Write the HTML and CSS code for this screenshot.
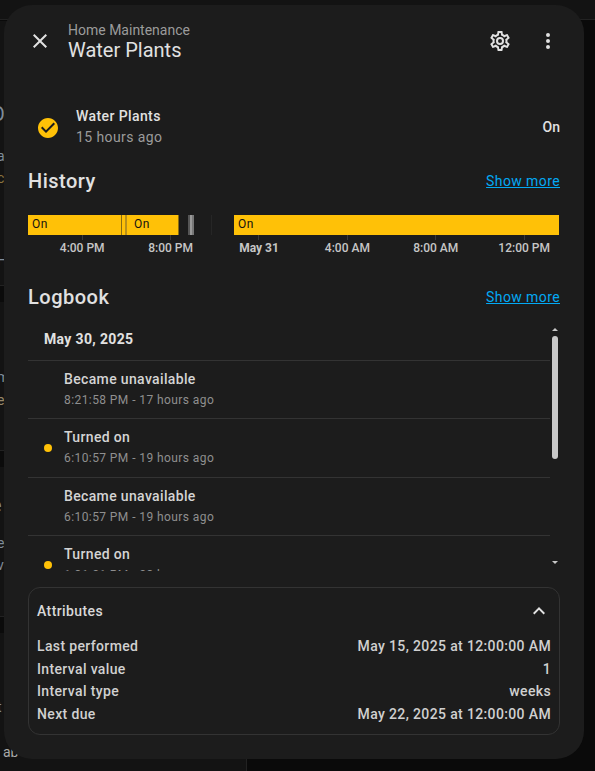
FILE: index.html
```html
<!DOCTYPE html>
<html>
<head>
    <link rel="stylesheet" href="styles.css">
</head>
<body>
    <!-- page behind the dialog, only a sliver shows -->
    <div class="behind">
        <div class="behind-top"></div>
        <div class="behind-left"></div>
        <div class="behind-bar b1"></div>
        <div class="behind-bar b2"></div>
        <div class="behind-bar b3"></div>
        <div class="scrap scrap-big s1">O</div>
        <div class="scrap s2">a</div>
        <div class="scrap s3">c</div>
        <div class="scrap s4">H</div>
        <div class="scrap s5">m</div>
        <div class="scrap s6">e</div>
        <div class="scrap scrap-big s7">e</div>
        <div class="scrap s8">e</div>
        <div class="scrap s9">v</div>
        <div class="scrap s10">t</div>
        <div class="scrap s11">ab</div>
        <div class="behind-split"></div>
    </div>

    <div class="dialog">
        <header class="dialog-header">
            <button class="icon-btn" type="button">
                <svg viewBox="0 0 24 24" class="icon"><path d="M19,6.41L17.59,5L12,10.59L6.41,5L5,6.41L10.59,12L5,17.59L6.41,19L12,13.41L17.59,19L19,17.59L13.41,12L19,6.41Z"/></svg>
            </button>
            <div class="dialog-title">
                <div class="breadcrumb">Home Maintenance</div>
                <div class="name">Water Plants</div>
            </div>
            <button class="icon-btn" type="button">
                <svg viewBox="0 0 24 24" class="icon"><path d="M12,8A4,4 0 0,1 16,12A4,4 0 0,1 12,16A4,4 0 0,1 8,12A4,4 0 0,1 12,8M12,10A2,2 0 0,0 10,12A2,2 0 0,0 12,14A2,2 0 0,0 14,12A2,2 0 0,0 12,10M10,22C9.75,22 9.54,21.82 9.5,21.58L9.13,18.93C8.5,18.68 7.96,18.34 7.44,17.94L4.95,18.95C4.73,19.03 4.46,18.95 4.34,18.73L2.34,15.27C2.21,15.05 2.27,14.78 2.46,14.63L4.57,12.97L4.5,12L4.57,11L2.46,9.37C2.27,9.22 2.21,8.95 2.34,8.73L4.34,5.27C4.46,5.05 4.73,4.96 4.95,5.05L7.44,6.05C7.96,5.66 8.5,5.32 9.13,5.07L9.5,2.42C9.54,2.18 9.75,2 10,2H14C14.25,2 14.46,2.18 14.5,2.42L14.87,5.07C15.5,5.32 16.04,5.66 16.56,6.05L19.05,5.05C19.27,4.96 19.54,5.05 19.66,5.27L21.66,8.73C21.79,8.95 21.73,9.22 21.54,9.37L19.43,11L19.5,12L19.43,13L21.54,14.63C21.73,14.78 21.79,15.05 21.66,15.27L19.66,18.73C19.54,18.95 19.27,19.04 19.05,18.95L16.56,17.95C16.04,18.34 15.5,18.68 14.87,18.93L14.5,21.58C14.46,21.82 14.25,22 14,22H10M11.25,4L10.88,6.61C9.68,6.86 8.62,7.5 7.85,8.39L5.44,7.35L4.69,8.65L6.8,10.2C6.4,11.37 6.4,12.64 6.8,13.8L4.68,15.36L5.43,16.66L7.86,15.62C8.63,16.5 9.68,17.14 10.87,17.38L11.24,20H12.76L13.13,17.39C14.32,17.14 15.37,16.5 16.14,15.62L18.57,16.66L19.32,15.36L17.2,13.81C17.6,12.64 17.6,11.37 17.2,10.2L19.31,8.65L18.56,7.35L16.15,8.39C15.38,7.5 14.32,6.86 13.12,6.62L12.75,4H11.25Z"/></svg>
            </button>
            <button class="icon-btn" type="button">
                <svg viewBox="0 0 24 24" class="icon"><path d="M12,16A2,2 0 0,1 14,18A2,2 0 0,1 12,20A2,2 0 0,1 10,18A2,2 0 0,1 12,16M12,10A2,2 0 0,1 14,12A2,2 0 0,1 12,14A2,2 0 0,1 10,12A2,2 0 0,1 12,10M12,4A2,2 0 0,1 14,6A2,2 0 0,1 12,8A2,2 0 0,1 10,6A2,2 0 0,1 12,4Z"/></svg>
            </button>
        </header>

        <div class="state-row">
            <svg viewBox="0 0 24 24" class="state-icon"><path d="M12 2C6.5 2 2 6.5 2 12S6.5 22 12 22 22 17.5 22 12 17.5 2 12 2M10 17L5 12L6.41 10.59L10 14.17L17.59 6.58L19 8L10 17Z"/></svg>
            <div class="state-text">
                <div class="state-name">Water Plants</div>
                <div class="state-time">15 hours ago</div>
            </div>
            <div class="state-value">On</div>
        </div>

        <div class="section-head section-history">
            <h3>History</h3>
            <a class="more" href="#">Show more</a>
        </div>

        <div class="timeline">
            <div class="bar">
                <div class="seg on w93"><span>On</span></div>
                <div class="seg dark w1"></div>
                <div class="seg on w3"></div>
                <div class="seg olive w2"></div>
                <div class="seg on w3"></div>
                <div class="seg on seg-edge w49"><span>On</span></div>
                <div class="seg gap w9"></div>
                <div class="seg grey w2"></div>
                <div class="seg grey2 w2"></div>
                <div class="seg grey3 w2"></div>
                <div class="seg gap w17"></div>
                <div class="seg faint w1"></div>
                <div class="seg gap w22"></div>
                <div class="seg on wide"><span>On</span></div>
            </div>
            <div class="ticks">
                <div class="tick">4:00 PM</div>
                <div class="tick">8:00 PM</div>
                <div class="tick major">May 31</div>
                <div class="tick">4:00 AM</div>
                <div class="tick">8:00 AM</div>
                <div class="tick">12:00 PM</div>
            </div>
        </div>

        <div class="section-head section-logbook">
            <h3>Logbook</h3>
            <a class="more" href="#">Show more</a>
        </div>

        <div class="logbook">
            <div class="log-list">
                <div class="log-date">May 30, 2025</div>
                <div class="log-entry">
                    <div class="dot-slot"></div>
                    <div>
                        <div class="log-msg">Became unavailable</div>
                        <div class="log-time">8:21:58 PM - 17 hours ago</div>
                    </div>
                </div>
                <div class="log-entry">
                    <div class="dot-slot"><div class="dot"></div></div>
                    <div>
                        <div class="log-msg">Turned on</div>
                        <div class="log-time">6:10:57 PM - 19 hours ago</div>
                    </div>
                </div>
                <div class="log-entry">
                    <div class="dot-slot"></div>
                    <div>
                        <div class="log-msg">Became unavailable</div>
                        <div class="log-time">6:10:57 PM - 19 hours ago</div>
                    </div>
                </div>
                <div class="log-entry">
                    <div class="dot-slot"><div class="dot"></div></div>
                    <div>
                        <div class="log-msg">Turned on</div>
                        <div class="log-time">1:31:21 PM - 23 hours ago</div>
                    </div>
                </div>
            </div>
            <div class="scrollbar">
                <div class="arrow arrow-up"></div>
                <div class="thumb"></div>
                <div class="arrow arrow-down"></div>
            </div>
        </div>

        <div class="attributes">
            <div class="attr-head">
                <span>Attributes</span>
                <svg viewBox="0 0 24 24" class="chevron"><path d="M7.41,15.41L12,10.83L16.59,15.41L18,14L12,8L6,14L7.41,15.41Z"/></svg>
            </div>
            <div class="attr-row attr-first"><span>Last performed</span><span>May 15, 2025 at 12:00:00 AM</span></div>
            <div class="attr-row"><span>Interval value</span><span>1</span></div>
            <div class="attr-row"><span>Interval type</span><span>weeks</span></div>
            <div class="attr-row"><span>Next due</span><span>May 22, 2025 at 12:00:00 AM</span></div>
        </div>
    </div>
</body>
</html>
```

FILE: styles.css
```css
* {
    box-sizing: border-box;
}

html, body {
    margin: 0;
    height: 100%;
    overflow: hidden;
}

body {
    background-color: #0a0a0a;
    font-family: Roboto, sans-serif;
    font-size: 14px;
    color: #e1e1e1;
    position: relative;
}

/* Page behind the dialog */
.behind {
    position: absolute;
    inset: 0;
    overflow: hidden;
}

.behind-top {
    height: 20px;
    background-color: #131313;
    border-bottom: 1px solid #222;
}

.behind-left {
    position: absolute;
    left: 0;
    top: 21px;
    bottom: 0;
    width: 246px;
    background-color: #131313;
}

.behind-bar {
    position: absolute;
    left: 0;
    width: 4px;
    height: 17px;
    background-color: #0b0b0b;
    border-top: 1px solid #222;
}

.b1 { top: 285px; }
.b2 { top: 450px; }
.b3 { top: 616px; }

.behind-split {
    position: absolute;
    left: 246px;
    top: 759px;
    width: 1px;
    height: 12px;
    background-color: #222;
}

.scrap {
    position: absolute;
    left: -3px;
    color: #7f8c99;
    font-size: 14px;
    line-height: 16px;
}

.scrap-big {
    font-size: 20px;
    left: -9px;
}

.s1 { top: 106px; }
.s2 { top: 148px; }
.s3 { top: 170px; color: #8a7440; }
.s4 { top: 252px; }
.s5 { top: 369px; }
.s6 { top: 392px; color: #97876a; }
.s7 { top: 497px; }
.s8 { top: 535px; }
.s9 { top: 557px; }
.s10 { top: 699px; }
.s11 { top: 744px; left: 3px; color: #aaa; }

/* Dialog */
.dialog {
    position: absolute;
    left: 4px;
    top: 5px;
    width: 580px;
    height: 754px;
    background-color: #1c1c1c;
    border-radius: 28px;
    padding: 0 24px;
    overflow: hidden;
}

.dialog-header {
    display: flex;
    align-items: center;
    height: 72px;
    margin: 0 -12px;
}

.icon-btn {
    width: 48px;
    height: 48px;
    padding: 12px;
    border: 0;
    background: none;
}

.icon {
    display: block;
    width: 24px;
    height: 24px;
    fill: #e1e1e1;
}

.dialog-title {
    flex: 1;
    padding-left: 4px;
    margin-top: 2px;
}

.breadcrumb {
    font-size: 14px;
    line-height: 16px;
    margin-top: -1px;
    color: #9b9b9b;
}

.name {
    font-size: 20px;
    line-height: 24px;
    color: #e1e1e1;
}

.state-row {
    display: flex;
    align-items: center;
    margin-top: 24px;
    height: 54px;
}

.state-icon {
    width: 24px;
    height: 24px;
    fill: #ffc107;
    margin-left: 8px;
    margin-right: 16px;
}

.state-text {
    flex: 1;
    margin-bottom: 4px;
}

.state-name {
    font-weight: 500;
    line-height: 20px;
    letter-spacing: 0.4px;
}

.state-time {
    line-height: 20px;
    color: #9b9b9b;
    letter-spacing: 0.4px;
    margin-top: 1px;
}

.state-value {
    font-weight: 500;
    margin-bottom: 2px;
}

.section-head {
    display: flex;
    justify-content: space-between;
    align-items: center;
    height: 32px;
}

.section-head h3 {
    margin: 0;
    font-size: 20px;
    font-weight: 500;
    letter-spacing: 0.5px;
}

.section-history {
    margin-top: 10px;
}

.more {
    color: #03a9f4;
    font-size: 14px;
    letter-spacing: 0.4px;
}

/* History timeline */
.timeline {
    margin-top: 18px;
    height: 52px;
}

.bar {
    display: flex;
    height: 20px;
}

.seg {
    height: 20px;
    flex: none;
    font-size: 12px;
    line-height: 18px;
    letter-spacing: 0.4px;
    color: #111;
    padding-left: 4px;
    overflow: hidden;
}

.on { background-color: #ffc107; }
.dark { background-color: #8a6d10; padding: 0; }
.olive { background-color: #b8901a; padding: 0; }
.gap { background-color: transparent; padding: 0; }
.grey { background-color: #555; padding: 0; }
.grey2 { background-color: #999; padding: 0; }
.grey3 { background-color: #777; padding: 0; }
.faint { background-color: #262626; padding: 0; }
.seg-edge { border-right: 1px solid #8a6d10; }

.w1 { width: 1px; }
.w2 { width: 2px; }
.w3 { width: 3px; padding: 0; }
.w9 { width: 9px; }
.w17 { width: 17px; }
.w22 { width: 22px; }
.w49 { width: 49px; }
.w93 { width: 93px; }
.wide { flex: 1; margin-right: 1px; }

.ticks {
    display: flex;
    padding-left: 10px;
}

.tick {
    width: 88.4px;
    flex: none;
    font-size: 12px;
    font-weight: 500;
    line-height: 14px;
    color: #c6c6c6;
    text-align: center;
}

/* small mark under the bar */
.tick::before {
    content: "";
    display: block;
    width: 1px;
    height: 5px;
    margin: 0 auto 1px;
    background-color: #3a3a3a;
}

.major {
    font-weight: 700;
}

.section-logbook {
    margin-top: 14px;
}

/* Logbook list */
.logbook {
    display: flex;
    margin-top: 10px;
    height: 248px;
    overflow: hidden;
}

.log-list {
    width: 522px;
    flex: none;
}

.log-date {
    height: 37px;
    padding: 6px 0 0 16px;
    font-weight: 700;
    line-height: 20px;
    letter-spacing: 0.35px;
    color: #e1e1e1;
}

.log-entry {
    display: flex;
    height: 58.3px;
    border-top: 1px solid #333;
    padding-top: 8px;
}

.dot-slot {
    width: 36px;
    flex: none;
    padding: 17px 0 0 16px;
}

.dot {
    width: 8px;
    height: 8px;
    border-radius: 50%;
    background-color: #ffc107;
}

.log-msg {
    line-height: 20px;
    font-weight: 500;
    letter-spacing: 0.35px;
    color: #d4d4d4;
}

.log-time {
    font-size: 12px;
    line-height: 16px;
    margin-top: 3px;
    letter-spacing: 0.42px;
    color: #8f8f8f;
}

.scrollbar {
    width: 6px;
    margin-left: 2px;
    position: relative;
    flex: none;
}

.thumb {
    position: absolute;
    top: 13px;
    left: 0;
    width: 6px;
    height: 123px;
    border-radius: 3px;
    background-color: #c8c8c8;
}

.arrow {
    position: absolute;
    left: 0;
    width: 0;
    height: 0;
    border-left: 3px solid transparent;
    border-right: 3px solid transparent;
}

.arrow-up {
    top: 5px;
    border-bottom: 3px solid #c8c8c8;
}

.arrow-down {
    top: 238px;
    border-top: 3px solid #c8c8c8;
}

/* Attributes card */
.attributes {
    margin-top: 16px;
    height: 148px;
    border: 1px solid #333;
    border-radius: 12px;
    padding: 0 8px;
}

.attr-head {
    display: flex;
    justify-content: space-between;
    align-items: center;
    height: 46px;
    font-weight: 500;
    color: #d8d8d8;
    letter-spacing: 0.4px;
}

.chevron {
    width: 24px;
    height: 24px;
    fill: #e1e1e1;
}

.attr-row {
    display: flex;
    justify-content: space-between;
    height: 22.6px;
    line-height: 22px;
    font-weight: 500;
    letter-spacing: 0.36px;
    color: #d0d0d0;
}

.attr-first {
    margin-top: 1px;
}
```
